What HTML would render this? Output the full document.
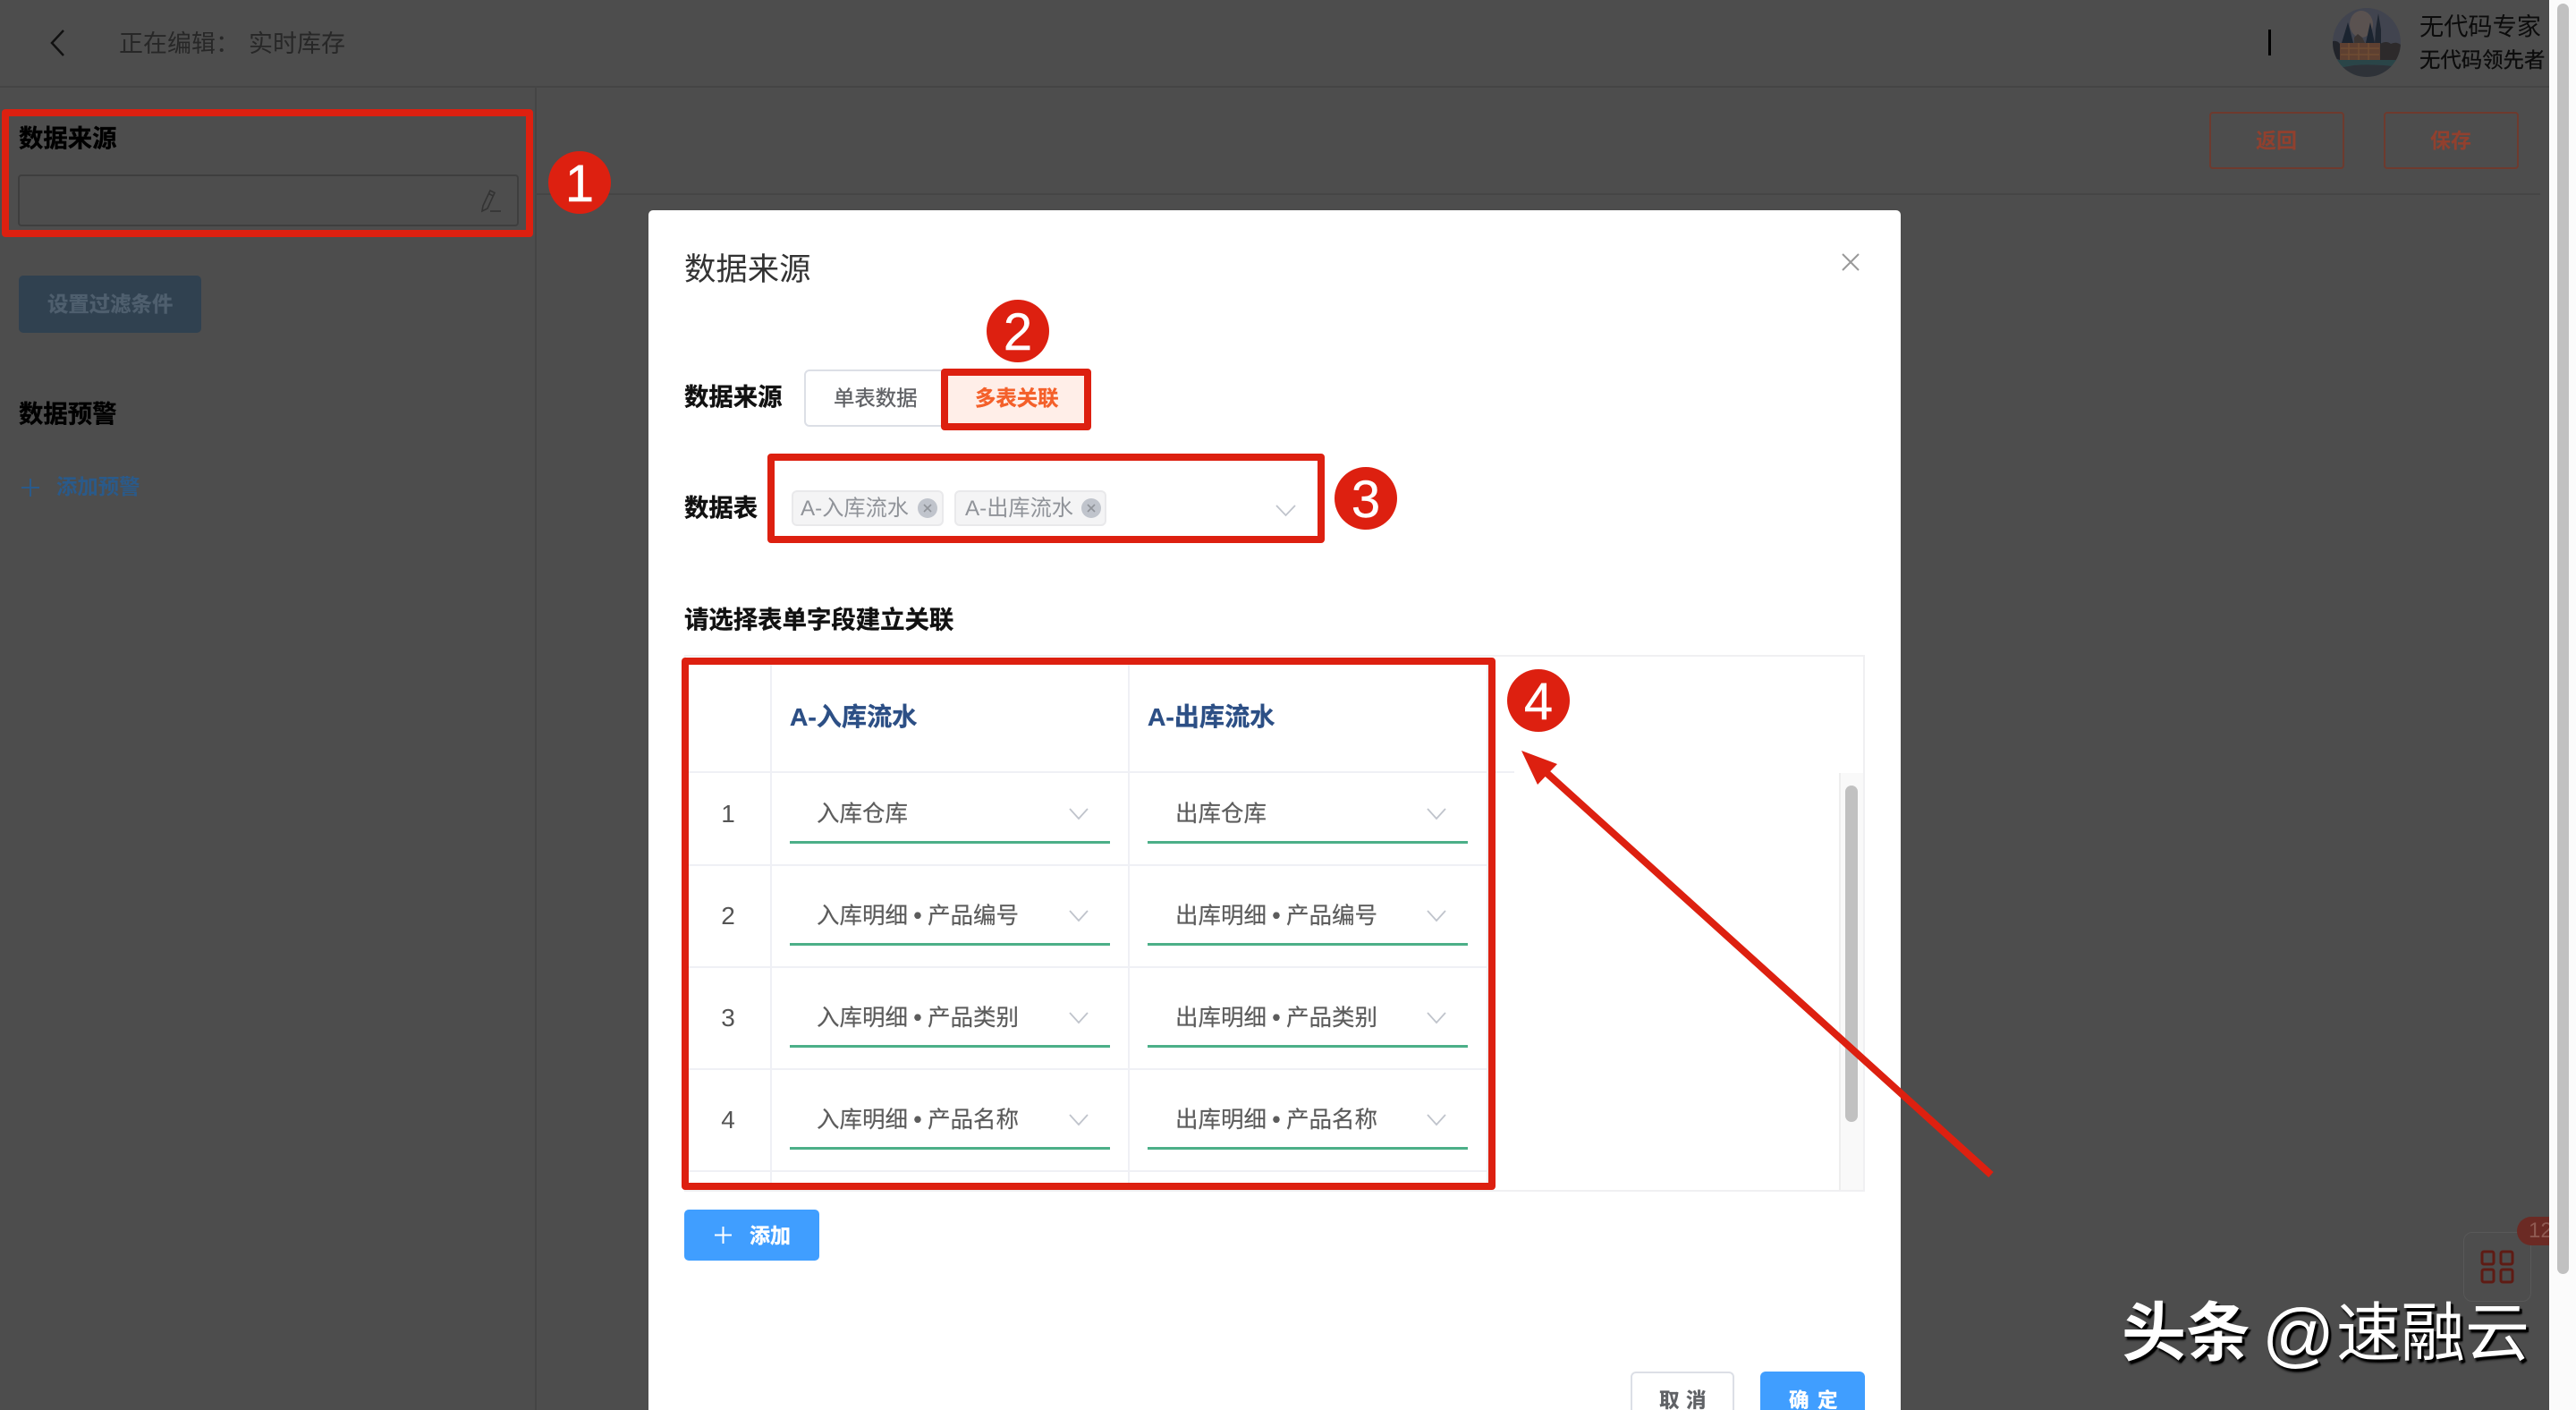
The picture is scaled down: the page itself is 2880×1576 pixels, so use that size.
<!DOCTYPE html>
<html lang="zh-CN">
<head>
<meta charset="utf-8">
<title>数据来源</title>
<style>
*{box-sizing:border-box}
html,body{margin:0;padding:0;width:2880px;height:1576px;overflow:hidden;background:#4d4d4d}
body{position:relative;font-family:"Liberation Sans","Noto Sans CJK SC",sans-serif}
.a{position:absolute}
.t{position:absolute;white-space:nowrap;line-height:40px;height:40px}
.b{font-weight:700;-webkit-text-stroke:.35px currentColor}
.line{position:absolute;background:#eff0f5}
.red{position:absolute;border:8px solid #dd2010;border-radius:4px}
.num{position:absolute;width:70px;height:70px;border-radius:50%;background:#dd2010;color:#fff;font-size:58px;line-height:73px;text-align:center;-webkit-text-stroke:.4px #fff}
.cell{font-size:25.5px;color:#5c5c5c;-webkit-text-stroke:.2px currentColor}
.dot{display:inline-block;width:22px;text-align:center;font-weight:700}
.g{position:absolute;height:2.5px;background:#4caf88}
.rn{font-size:28px;color:#555;width:30px;text-align:center}
</style>
</head>
<body>

<!-- dark page -->
<div class="a" style="left:2850px;top:0;width:30px;height:1576px;background:#fbfbfb"></div>
<div class="a" style="left:2859px;top:4px;width:13px;height:1420px;border-radius:7px;background:#c1c1c1"></div>

<div class="a" style="left:0;top:96px;width:2850px;height:2px;background:#454545"></div>
<div class="a" style="left:598px;top:97px;width:2px;height:1479px;background:#454545"></div>
<div class="a" style="left:600px;top:216px;width:2240px;height:2px;background:#454545"></div>

<svg class="a" style="left:50px;top:28px" width="30" height="40" viewBox="0 0 30 40"><path d="M21 6 L8 20 L21 34" fill="none" stroke="#111" stroke-width="2.5"/></svg>
<div class="t" style="left:133px;top:29px;font-size:27px;color:#272727">正在编辑：</div>
<div class="t" style="left:278px;top:29px;font-size:27px;color:#272727">实时库存</div>

<div class="a" style="left:2536px;top:33px;width:2.5px;height:29px;background:#000"></div>
<svg class="a" style="left:2608px;top:9px" width="76" height="77" viewBox="0 0 76 77">
<defs><clipPath id="av"><ellipse cx="38" cy="38.5" rx="38" ry="38.5"/></clipPath></defs>
<g clip-path="url(#av)">
<rect width="76" height="77" fill="#41444f"/>
<ellipse cx="32" cy="18" rx="13" ry="15" fill="#5a5250"/>
<path d="M0 37 Q5 36 8 40 L8 58 L0 56Z" fill="#22242a"/>
<path d="M53 40 Q60 36 65 40 Q71 37 76 41 L76 59 L53 59Z" fill="#2d2a2b"/>
<path d="M10 39 L17 16 L23 39Z" fill="#1b2430"/>
<path d="M37 39 L42 16 L47 39Z" fill="#1b2430"/>
<path d="M47 40 L48 24 L51 6 L54 24 L54 40Z" fill="#1f2630"/>
<path d="M24 39 V33 L28 29 L33 33 L36 39Z" fill="#3a3432"/>
<rect x="8" y="39" width="45" height="21" fill="#5e4031"/>
<path d="M9 45h43M9 52h43M18 39v21M29 39v21M40 39v21" stroke="#6f4c33" stroke-width="1.5"/>
<path d="M0 58 L76 58 L76 66 Q44 62 24 64 L0 68Z" fill="#2a4548"/>
<path d="M0 68 L24 64 Q44 62 76 66 L76 77 L0 77Z" fill="#2e3238"/>
</g></svg>
<div class="t" style="left:2705px;top:10px;font-size:27.2px;color:#0c0c0c">无代码专家</div>
<div class="t" style="left:2705px;top:47px;font-size:23.4px;color:#0c0c0c;-webkit-text-stroke:.3px #0c0c0c">无代码领先者</div>

<div class="t b" style="left:21px;top:135px;font-size:27.4px;color:#000">数据来源</div>
<div class="a" style="left:20px;top:195px;width:560px;height:58px;border:2px solid #3e3e3e;border-radius:4px"></div>
<svg class="a" style="left:534px;top:209px" width="28" height="30" viewBox="0 0 28 30"><path d="M6 21 L14 4 L19 6.5 L11 24 L5 27Z M12.5 7.5 L17.5 10" fill="none" stroke="#333" stroke-width="1.6"/><path d="M14 27 H26" stroke="#333" stroke-width="1.6"/></svg>

<div class="a" style="left:21px;top:308px;width:204px;height:64px;border-radius:5px;background:#304150"></div>
<div class="t b" style="left:53px;top:320px;font-size:23.4px;color:#4f5f6e">设置过滤条件</div>

<div class="t b" style="left:21px;top:443px;font-size:27.4px;color:#000">数据预警</div>
<svg class="a" style="left:23px;top:534px" width="22" height="22" viewBox="0 0 22 22"><path d="M11 1 V21 M1 11 H21" stroke="#2a5a8a" stroke-width="2"/></svg>
<div class="t" style="left:63px;top:524px;font-size:23.4px;font-weight:700;color:#2a5a8a">添加预警</div>

<div class="a" style="left:2470px;top:125px;width:151px;height:64px;border:2.5px solid #6e3a2e;border-radius:4px"></div>
<div class="t" style="left:2522px;top:137px;font-size:23px;font-weight:700;color:#91402e">返回</div>
<div class="a" style="left:2665px;top:125px;width:151px;height:64px;border:2.5px solid #6e3a2e;border-radius:4px"></div>
<div class="t" style="left:2717px;top:137px;font-size:23px;font-weight:700;color:#91402e">保存</div>

<!-- app widget -->
<div class="a" style="left:2754px;top:1377px;width:76px;height:78px;border:1px solid #585858;border-radius:10px"></div>
<svg class="a" style="left:2773px;top:1397px" width="38" height="38" viewBox="0 0 38 38"><g fill="none" stroke="#5e1b14" stroke-width="3"><rect x="2" y="2" width="13" height="14" rx="2"/><rect x="23" y="2" width="13" height="14" rx="2"/><rect x="2" y="22" width="13" height="14" rx="2"/><rect x="23" y="22" width="13" height="14" rx="2"/></g></svg>
<div class="a" style="left:2814px;top:1360px;width:36px;height:32px;border-radius:16px 0 0 16px;background:#6b2a24;overflow:hidden;color:#8f5a52;font-size:24px;line-height:32px;padding-left:13px;white-space:nowrap">12</div>

<!-- modal -->
<div class="a" style="left:725px;top:235px;width:1400px;height:1341px;background:#fff;border-radius:5px 5px 0 0"></div>
<div class="t" style="left:765px;top:281px;font-size:35.4px;color:#333">数据来源</div>
<svg class="a" style="left:2059px;top:283px" width="20" height="20" viewBox="0 0 20 20"><path d="M1 1 L19 19 M19 1 L1 19" stroke="#999" stroke-width="2"/></svg>

<div class="t b" style="left:765px;top:424px;font-size:27.4px;color:#111">数据来源</div>
<div class="a" style="left:899px;top:413px;width:165px;height:64px;border:2px solid #dcdfe6;border-radius:6px 0 0 6px"></div>
<div class="t" style="left:932px;top:425px;font-size:23.4px;color:#606266;-webkit-text-stroke:.35px #606266">单表数据</div>
<div class="a" style="left:1056px;top:420px;width:158px;height:54px;background:#ffeee8"></div>
<div class="t b" style="left:1090px;top:425px;font-size:23.4px;color:#f4602a">多表关联</div>

<div class="t b" style="left:765px;top:548px;font-size:27.4px;color:#111">数据表</div>
<div class="a" style="left:885px;top:548px;width:170px;height:40px;background:#f4f4f5;border:2px solid #e9e9eb;border-radius:6px"></div>
<div class="t" style="left:895px;top:549px;font-size:24.2px;color:#909399">A-入库流水</div>
<div class="a" style="left:1026px;top:557px;width:22px;height:22px;border-radius:50%;background:#c0c4cc"></div>
<svg class="a" style="left:1026px;top:557px" width="22" height="22" viewBox="0 0 22 22"><path d="M7 7 L15 15 M15 7 L7 15" stroke="#909399" stroke-width="1.6"/></svg>
<div class="a" style="left:1067px;top:548px;width:170px;height:40px;background:#f4f4f5;border:2px solid #e9e9eb;border-radius:6px"></div>
<div class="t" style="left:1079px;top:549px;font-size:24.2px;color:#909399">A-出库流水</div>
<div class="a" style="left:1209px;top:557px;width:22px;height:22px;border-radius:50%;background:#c0c4cc"></div>
<svg class="a" style="left:1209px;top:557px" width="22" height="22" viewBox="0 0 22 22"><path d="M7 7 L15 15 M15 7 L7 15" stroke="#909399" stroke-width="1.6"/></svg>
<svg class="a" style="left:1426px;top:564px" width="23" height="14" viewBox="0 0 23 14"><path d="M1 1 L11.5 12 L22 1" fill="none" stroke="#c0c4cc" stroke-width="1.8"/></svg>

<div class="t b" style="left:765px;top:673px;font-size:27.4px;color:#111">请选择表单字段建立关联</div>

<!-- table -->
<div class="a" style="left:765px;top:732px;width:1320px;height:600px;border:2px solid #f0f0f2"></div>
<div class="line" style="left:861px;top:735px;width:2px;height:595px"></div>
<div class="line" style="left:1261px;top:735px;width:2px;height:595px"></div>
<div class="line" style="left:1662px;top:735px;width:2px;height:595px"></div>
<div class="line" style="left:767px;top:862px;width:926px;height:2px"></div>
<div class="line" style="left:767px;top:966px;width:896px;height:2px"></div>
<div class="line" style="left:767px;top:1080px;width:896px;height:2px"></div>
<div class="line" style="left:767px;top:1194px;width:896px;height:2px"></div>
<div class="line" style="left:767px;top:1308px;width:896px;height:2px"></div>

<div class="a" style="left:2056px;top:864px;width:27px;height:466px;background:#f9f9f9;border-left:2px solid #eeeeee"></div>
<div class="a" style="left:2063px;top:878px;width:14px;height:376px;border-radius:7px;background:#c1c1c1"></div>

<div class="t b" style="left:883px;top:781px;font-size:28.2px;color:#2c4f85">A-入库流水</div>
<div class="t b" style="left:1283px;top:781px;font-size:28.2px;color:#2c4f85">A-出库流水</div>

<div class="t rn" style="left:799px;top:890px">1</div>
<div class="t rn" style="left:799px;top:1004px">2</div>
<div class="t rn" style="left:799px;top:1118px">3</div>
<div class="t rn" style="left:799px;top:1232px">4</div>

<div class="t cell" style="left:913px;top:890px">入库仓库</div>
<div class="t cell" style="left:1314px;top:890px">出库仓库</div>
<div class="t cell" style="left:913px;top:1004px">入库明细<span class="dot">•</span>产品编号</div>
<div class="t cell" style="left:1314px;top:1004px">出库明细<span class="dot">•</span>产品编号</div>
<div class="t cell" style="left:913px;top:1118px">入库明细<span class="dot">•</span>产品类别</div>
<div class="t cell" style="left:1314px;top:1118px">出库明细<span class="dot">•</span>产品类别</div>
<div class="t cell" style="left:913px;top:1232px">入库明细<span class="dot">•</span>产品名称</div>
<div class="t cell" style="left:1314px;top:1232px">出库明细<span class="dot">•</span>产品名称</div>

<svg class="a" style="left:1195px;top:903px" width="22" height="14" viewBox="0 0 22 14"><path d="M1 1 L11 12 L21 1" fill="none" stroke="#c0c4cc" stroke-width="1.8"/></svg>
<svg class="a" style="left:1595px;top:903px" width="22" height="14" viewBox="0 0 22 14"><path d="M1 1 L11 12 L21 1" fill="none" stroke="#c0c4cc" stroke-width="1.8"/></svg>
<svg class="a" style="left:1195px;top:1017px" width="22" height="14" viewBox="0 0 22 14"><path d="M1 1 L11 12 L21 1" fill="none" stroke="#c0c4cc" stroke-width="1.8"/></svg>
<svg class="a" style="left:1595px;top:1017px" width="22" height="14" viewBox="0 0 22 14"><path d="M1 1 L11 12 L21 1" fill="none" stroke="#c0c4cc" stroke-width="1.8"/></svg>
<svg class="a" style="left:1195px;top:1131px" width="22" height="14" viewBox="0 0 22 14"><path d="M1 1 L11 12 L21 1" fill="none" stroke="#c0c4cc" stroke-width="1.8"/></svg>
<svg class="a" style="left:1595px;top:1131px" width="22" height="14" viewBox="0 0 22 14"><path d="M1 1 L11 12 L21 1" fill="none" stroke="#c0c4cc" stroke-width="1.8"/></svg>
<svg class="a" style="left:1195px;top:1245px" width="22" height="14" viewBox="0 0 22 14"><path d="M1 1 L11 12 L21 1" fill="none" stroke="#c0c4cc" stroke-width="1.8"/></svg>
<svg class="a" style="left:1595px;top:1245px" width="22" height="14" viewBox="0 0 22 14"><path d="M1 1 L11 12 L21 1" fill="none" stroke="#c0c4cc" stroke-width="1.8"/></svg>

<div class="g" style="left:883px;top:940px;width:358px"></div>
<div class="g" style="left:1283px;top:940px;width:358px"></div>
<div class="g" style="left:883px;top:1054px;width:358px"></div>
<div class="g" style="left:1283px;top:1054px;width:358px"></div>
<div class="g" style="left:883px;top:1168px;width:358px"></div>
<div class="g" style="left:1283px;top:1168px;width:358px"></div>
<div class="g" style="left:883px;top:1282px;width:358px"></div>
<div class="g" style="left:1283px;top:1282px;width:358px"></div>

<!-- add -->
<div class="a" style="left:765px;top:1352px;width:151px;height:57px;border-radius:5px;background:#409eff"></div>
<svg class="a" style="left:798px;top:1370px" width="21" height="21" viewBox="0 0 21 21"><path d="M10.5 1 V20 M1 10.5 H20" stroke="#fff" stroke-width="2"/></svg>
<div class="t b" style="left:838px;top:1361px;font-size:23px;color:#fff">添加</div>

<!-- footer -->
<div class="a" style="left:1823px;top:1533px;width:116px;height:60px;border:2px solid #dcdfe6;border-radius:6px;background:#fff"></div>
<div class="t b" style="left:1855px;top:1546px;font-size:22.5px;color:#606266">取</div>
<div class="t b" style="left:1885px;top:1546px;font-size:22.5px;color:#606266">消</div>
<div class="a" style="left:1968px;top:1533px;width:117px;height:60px;border-radius:6px;background:#409eff"></div>
<div class="t b" style="left:2000px;top:1546px;font-size:22.5px;color:#fff">确</div>
<div class="t b" style="left:2032px;top:1546px;font-size:22.5px;color:#fff">定</div>

<!-- annotations -->
<div class="red" style="left:2px;top:122px;width:594px;height:143px"></div>
<div class="red" style="left:1052px;top:412px;width:168px;height:69px"></div>
<div class="red" style="left:858px;top:507px;width:623px;height:100px"></div>
<div class="red" style="left:762px;top:735px;width:910px;height:595px"></div>

<div class="num" style="left:613px;top:169px">1</div>
<div class="num" style="left:1103px;top:335px">2</div>
<div class="num" style="left:1492px;top:522px">3</div>
<div class="num" style="left:1685px;top:748px">4</div>

<svg class="a" style="left:0;top:0;pointer-events:none" width="2880" height="1576" viewBox="0 0 2880 1576">
<path d="M1727 862 L2226 1313" stroke="#dd2010" stroke-width="8" fill="none"/>
<path d="M1701 839 L1741 854 L1719 877Z" fill="#dd2010"/>
</svg>

<!-- watermark -->
<div class="a" style="left:2372px;top:1451px;height:80px;line-height:80px;font-size:72px;font-weight:700;color:#fff;white-space:nowrap;text-shadow:3px 3px 1px #000,2px 4px 2px #111">头条</div>
<div class="a" style="left:2529px;top:1452px;height:80px;line-height:80px;font-size:80px;color:#fff;white-space:nowrap;text-shadow:3px 3px 1px #000,2px 4px 2px #111">@</div>
<div class="a" style="left:2612px;top:1451px;height:80px;line-height:80px;font-size:72px;color:#fff;white-space:nowrap;text-shadow:3px 3px 1px #000,2px 4px 2px #111">速融云</div>

</body>
</html>
